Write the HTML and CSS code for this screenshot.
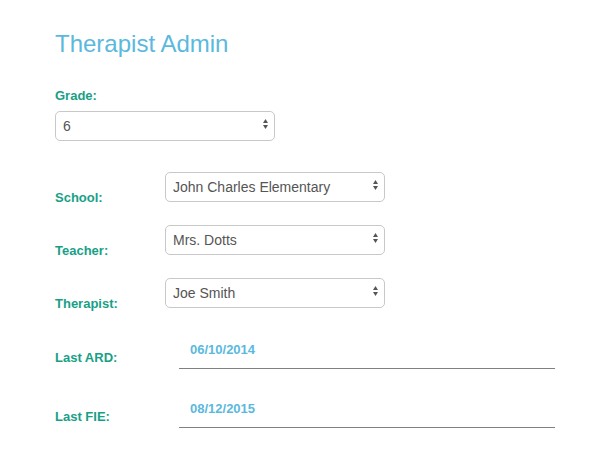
FILE: index.html
```html
<!DOCTYPE html>
<html>
<head>
<meta charset="utf-8">
<link rel="stylesheet" href="styles.css">
</head>
<body>
<div class="page">
  <h1 class="title">Therapist Admin</h1>

  <div class="grade">
    <label class="label grade-label">Grade:</label>
    <div class="select-wrap">
      <select class="select"><option>6</option></select>
      <svg class="arrows" width="5" height="10" viewBox="0 0 5 10"><path d="M2.5 0 L5 4 L0 4 Z M0 6 L5 6 L2.5 10 Z" fill="#555"/></svg>
    </div>
  </div>

  <div class="row">
    <label class="label row-label">School:</label>
    <div class="select-wrap">
      <select class="select"><option>John Charles Elementary</option></select>
      <svg class="arrows" width="5" height="10" viewBox="0 0 5 10"><path d="M2.5 0 L5 4 L0 4 Z M0 6 L5 6 L2.5 10 Z" fill="#555"/></svg>
    </div>
  </div>

  <div class="row">
    <label class="label row-label">Teacher:</label>
    <div class="select-wrap">
      <select class="select"><option>Mrs. Dotts</option></select>
      <svg class="arrows" width="5" height="10" viewBox="0 0 5 10"><path d="M2.5 0 L5 4 L0 4 Z M0 6 L5 6 L2.5 10 Z" fill="#555"/></svg>
    </div>
  </div>

  <div class="row">
    <label class="label row-label">Therapist:</label>
    <div class="select-wrap">
      <select class="select"><option>Joe Smith</option></select>
      <svg class="arrows" width="5" height="10" viewBox="0 0 5 10"><path d="M2.5 0 L5 4 L0 4 Z M0 6 L5 6 L2.5 10 Z" fill="#555"/></svg>
    </div>
  </div>

  <div class="date-row first">
    <label class="label date-label">Last ARD:</label>
    <div class="date">06/10/2014</div>
  </div>

  <div class="date-row">
    <label class="label date-label">Last FIE:</label>
    <div class="date">08/12/2015</div>
  </div>
</div>
</body>
</html>
```

FILE: styles.css
```css
html, body {
  margin: 0;
  padding: 0;
  background: #fff;
}

body {
  font-family: "Liberation Sans", Arial, Helvetica, sans-serif;
  color: #555;
}

.page {
  padding: 30px 20px 0 55px;
}

.title {
  margin: 0;
  font-size: 24px;
  line-height: 28px;
  font-weight: normal;
  color: #5bb9dd;
}

.label {
  display: block;
  font-size: 13px;
  line-height: 16px;
  font-weight: bold;
  color: #18a086;
}

.grade {
  margin-top: 29.5px;
}

.grade-label {
  margin-bottom: 7.5px;
}

.select-wrap {
  position: relative;
  flex-shrink: 0;
  width: 220px;
  height: 30px;
}

.select {
  -webkit-appearance: none;
  appearance: none;
  box-sizing: border-box;
  width: 220px;
  height: 30px;
  margin: 0;
  padding: 0 20px 0 7px;
  border: 1px solid #c8c8c8;
  border-radius: 5px;
  background: #fff;
  font-family: "Liberation Sans", Arial, Helvetica, sans-serif;
  font-size: 14px;
  color: #555;
  outline: none;
}

.arrows {
  position: absolute;
  right: 7px;
  top: 8px;
  pointer-events: none;
}

.row {
  display: flex;
  align-items: flex-start;
  margin-top: 30.5px;
}

.row + .row {
  margin-top: 19px;
}

.row-label {
  flex-shrink: 0;
  width: 110px;
  padding-top: 18px;
}

.date-row {
  display: flex;
  align-items: flex-start;
  margin-top: 24px;
}

.date-row.first {
  margin-top: 22px;
}

.date-label {
  flex-shrink: 0;
  width: 124px;
  padding-top: 16px;
}

.date {
  flex-shrink: 0;
  box-sizing: border-box;
  width: 376px;
  padding: 8px 11px 10px 11px;
  font-size: 13px;
  line-height: 16px;
  font-weight: bold;
  color: #5bb9dd;
  border-bottom: 1px solid #808080;
}
```
